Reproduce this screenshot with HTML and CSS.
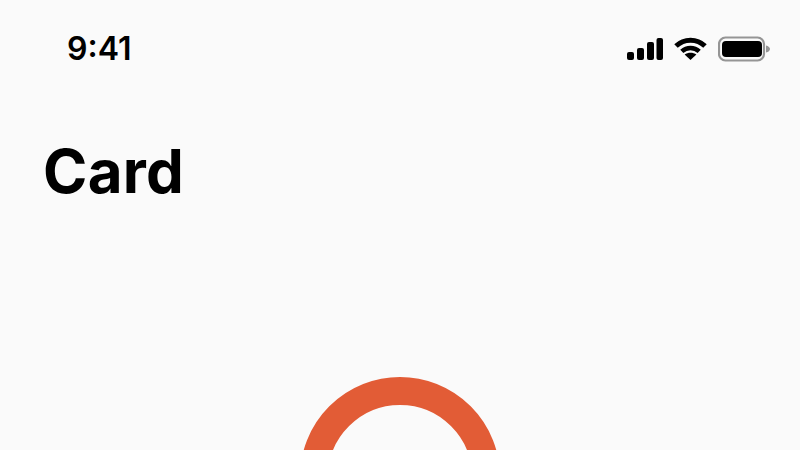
FILE: index.html
```html
<!DOCTYPE html>
<html lang="en">
<head>
<meta charset="utf-8">
<title>Card</title>
<link rel="stylesheet" href="styles.css">
</head>
<body>
<main class="screen">
  <header class="status">
    <span class="time">9:41</span>
    <div class="indicators">
      <svg class="signal" width="36" height="22" viewBox="0 0 36 22" aria-hidden="true">
        <rect x="0" y="14" width="7" height="8" rx="2"/>
        <rect x="10" y="10" width="7" height="12" rx="2"/>
        <rect x="20" y="4" width="7" height="18" rx="2"/>
        <rect x="29.5" y="0" width="6.5" height="22" rx="2"/>
      </svg>
      <svg class="wifi" width="33" height="24" viewBox="0 0 33 24" aria-hidden="true">
        <path d="M2 9 C10 1.2 23 1.2 31 9" fill="none" stroke="#000" stroke-width="5"/>
        <path d="M7.8 14.4 C12.8 9.8 20.2 9.8 25.2 14.4" fill="none" stroke="#000" stroke-width="4.6"/>
        <path d="M16.5 23 L10.6 17.6 C14 15 19 15 22.4 17.6 Z"/>
      </svg>
      <svg class="battery" width="52" height="26" viewBox="0 0 52 26" aria-hidden="true">
        <rect x="1" y="1.5" width="45" height="23" rx="6.5" fill="none" stroke="#959595" stroke-width="2.2"/>
        <rect x="4" y="5" width="40" height="16" rx="4"/>
        <path d="M48 9.5 C50.5 10 52 11.5 52 13 C52 14.5 50.5 16 48 16.5 Z" fill="#959595"/>
      </svg>
    </div>
  </header>
  <h1 class="title">Card</h1>
  <div class="ring-wrap"><div class="ring"></div></div>
</main>
</body>
</html>
```

FILE: styles.css
```css
* { box-sizing: border-box; }
html, body { margin: 0; height: 100%; }
body { background: #fafafa; overflow: hidden; color: #000; font-family: Inter, "Liberation Sans", sans-serif; }
.screen { width: 800px; height: 450px; overflow: hidden; }
.status { display: flex; justify-content: space-between; align-items: center; height: 74px; padding: 24px 30px 0 67px; }
.time { font-size: 32px; font-weight: 600; line-height: 50px; height: 50px; }
.indicators { display: flex; align-items: center; gap: 11px; }
.title { margin: 0; padding: 59px 0 0 43px; font-size: 60px; font-weight: 700; line-height: 76px; letter-spacing: 0.3px; }
.ring-wrap { display: flex; justify-content: center; padding-top: 168px; }
.ring { flex: none; width: 200px; height: 200px; border-radius: 50%; border: 28.5px solid #e25c36; }
```
